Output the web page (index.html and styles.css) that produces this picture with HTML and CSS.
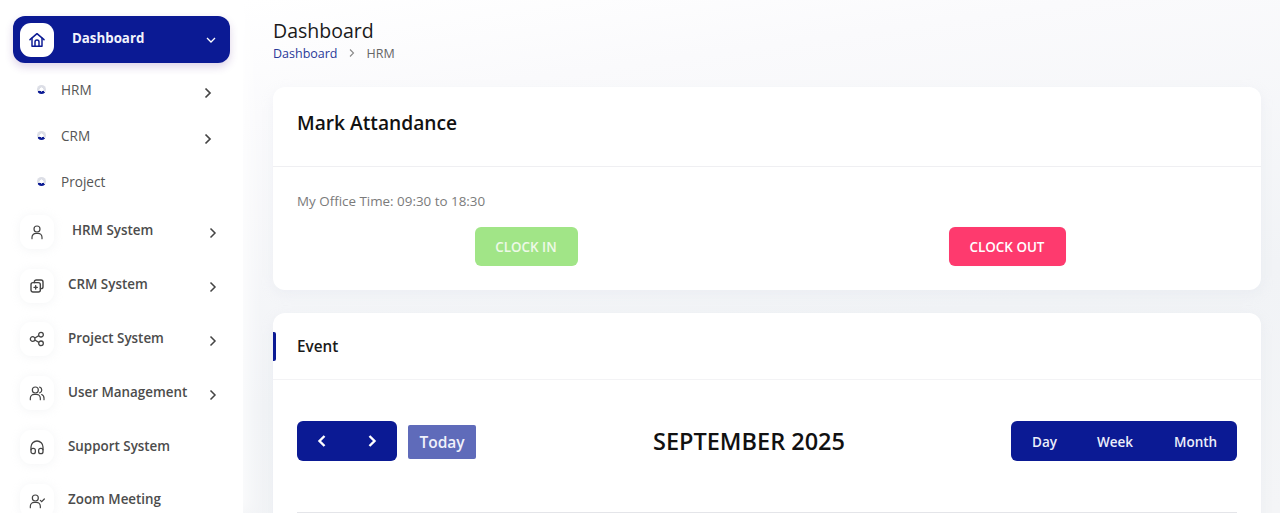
FILE: index.html
```html
<!DOCTYPE html>
<html lang="en">
<head>
<meta charset="utf-8">
<title>Dashboard</title>
<link rel="stylesheet" href="styles.css">
</head>
<body>
<div class="app">
  <aside class="sidebar">
    <a class="nav-active">
      <span class="icon-box"><svg width="16" height="16" viewBox="0 0 24 24" fill="none" stroke="#0b1a94" stroke-width="2.200" stroke-linejoin="round" stroke-linecap="round"><path d="M1.500 11.500 12 2.500l10.500 9"/><path d="M4.500 9.500V21.500h15V9.500"/><path d="M9 21.500V15a3 3 0 0 1 6 0v6.500"/></svg></span>
      <span class="active-label">Dashboard</span>
      <svg class="active-caret" width="12" height="12" viewBox="0 0 12 12" fill="none" stroke="#fff" stroke-width="1.300"><path d="M2 4l4 4 4-4"/></svg>
    </a>
    <ul class="sub">
      <li class="sub-item"><span class="dot"></span><span class="sub-label">HRM</span><svg class="sub-caret" width="10" height="12" viewBox="0 0 10 12" fill="none" stroke="#444" stroke-width="1.700"><path d="M2.500 1.500 7 6l-4.500 4.500"/></svg></li>
      <li class="sub-item"><span class="dot"></span><span class="sub-label">CRM</span><svg class="sub-caret" width="10" height="12" viewBox="0 0 10 12" fill="none" stroke="#444" stroke-width="1.700"><path d="M2.500 1.500 7 6l-4.500 4.500"/></svg></li>
      <li class="sub-item"><span class="dot"></span><span class="sub-label">Project</span></li>
    </ul>
    <ul class="menu">
      <li class="menu-item">
        <span class="icon-box soft"><svg width="16" height="16" viewBox="0 0 24 24" fill="none" stroke="#444" stroke-width="1.800" stroke-linecap="round"><circle cx="12" cy="7.500" r="4.500"/><path d="M4.500 22v-2a6 6 0 0 1 6-6h3a6 6 0 0 1 6 6v2"/></svg></span>
        <span class="menu-label first">HRM System</span>
        <svg class="menu-caret" width="10" height="12" viewBox="0 0 10 12" fill="none" stroke="#444" stroke-width="1.500"><path d="M2.500 1.500 7 6l-4.500 4.500"/></svg>
      </li>
      <li class="menu-item">
        <span class="icon-box soft"><svg width="16" height="16" viewBox="0 0 24 24" fill="none" stroke="#444" stroke-width="2.100" stroke-linejoin="round" stroke-linecap="round"><path d="M8 7V6a3 3 0 0 1 3-3h7a3 3 0 0 1 3 3v7a3 3 0 0 1-3 3h-1"/><rect x="3" y="7" width="14" height="14" rx="3"/><path d="M10 11.500v5M7.500 14h5"/></svg></span>
        <span class="menu-label">CRM System</span>
        <svg class="menu-caret" width="10" height="12" viewBox="0 0 10 12" fill="none" stroke="#444" stroke-width="1.500"><path d="M2.500 1.500 7 6l-4.500 4.500"/></svg>
      </li>
      <li class="menu-item">
        <span class="icon-box soft"><svg width="16" height="16" viewBox="0 0 24 24" fill="none" stroke="#444" stroke-width="1.900"><circle cx="5.500" cy="12" r="3.500"/><circle cx="18" cy="5.500" r="3.500"/><circle cx="18" cy="18.500" r="3.500"/><path d="M8.700 10.400 14.900 7M8.700 13.600l6.200 3.400"/></svg></span>
        <span class="menu-label">Project System</span>
        <svg class="menu-caret" width="10" height="12" viewBox="0 0 10 12" fill="none" stroke="#444" stroke-width="1.500"><path d="M2.500 1.500 7 6l-4.500 4.500"/></svg>
      </li>
      <li class="menu-item">
        <span class="icon-box soft"><svg width="16" height="16" viewBox="0 0 24 24" fill="none" stroke="#444" stroke-width="1.800" stroke-linecap="round"><circle cx="9.500" cy="7.500" r="4.500"/><path d="M2 22v-2a6 6 0 0 1 6-6h3a6 6 0 0 1 6 6v2"/><path d="M16 3.200a4.500 4.500 0 0 1 0 8.600M19 14.300a6 6 0 0 1 3.500 5.700v2"/></svg></span>
        <span class="menu-label">User Management</span>
        <svg class="menu-caret" width="10" height="12" viewBox="0 0 10 12" fill="none" stroke="#444" stroke-width="1.500"><path d="M2.500 1.500 7 6l-4.500 4.500"/></svg>
      </li>
      <li class="menu-item">
        <span class="icon-box soft"><svg width="16" height="16" viewBox="0 0 24 24" fill="none" stroke="#444" stroke-width="1.900" stroke-linejoin="round"><path d="M3 17v-5a9 9 0 0 1 18 0v5"/><rect x="3" y="14" width="6.500" height="8" rx="3"/><rect x="14.500" y="14" width="6.500" height="8" rx="3"/></svg></span>
        <span class="menu-label">Support System</span>
      </li>
      <li class="menu-item">
        <span class="icon-box soft"><svg width="16" height="16" viewBox="0 0 24 24" fill="none" stroke="#444" stroke-width="1.800" stroke-linecap="round"><circle cx="9.500" cy="7.500" r="4.500"/><path d="M2 22v-2a6 6 0 0 1 6-6h3a6 6 0 0 1 6 6v2"/><path d="m17 11 2 2 4-4"/></svg></span>
        <span class="menu-label">Zoom Meeting</span>
      </li>
    </ul>
  </aside>
  <main class="main">
    <header class="page-head">
      <h1 class="page-title">Dashboard</h1>
      <nav class="crumbs"><span class="crumb-link">Dashboard</span><svg class="crumb-sep" width="8" height="10" viewBox="0 0 8 10" fill="none" stroke="#888" stroke-width="1.100"><path d="M2 1.500 5.500 5 2 8.500"/></svg><span class="crumb-now">HRM</span></nav>
    </header>
    <section class="card attendance">
      <div class="attendance-head"><h2 class="attendance-title">Mark Attandance</h2></div>
      <div class="attendance-body">
        <p class="office-time">My Office Time: 09:30 to 18:30</p>
        <div class="clock-row">
          <div class="clock-cell"><button class="clock clock-in">CLOCK IN</button></div>
          <div class="clock-cell"><button class="clock clock-out">CLOCK OUT</button></div>
        </div>
      </div>
    </section>
    <section class="card event">
      <div class="event-head"><span class="event-mark"></span><h2 class="event-title">Event</h2></div>
      <div class="event-body">
        <div class="toolbar">
          <div class="tool-left">
            <div class="btn-group arrows">
              <button class="arrow"><svg width="12" height="14" viewBox="0 0 12 14" fill="none" stroke="#fff" stroke-width="2.400"><path d="M8.500 2 3.500 7l5 5"/></svg></button>
              <button class="arrow"><svg width="12" height="14" viewBox="0 0 12 14" fill="none" stroke="#fff" stroke-width="2.400"><path d="M3.500 2l5 5-5 5"/></svg></button>
            </div>
            <button class="today">Today</button>
          </div>
          <h2 class="month-title">SEPTEMBER 2025</h2>
          <div class="btn-group views">
            <button class="view">Day</button>
            <button class="view">Week</button>
            <button class="view">Month</button>
          </div>
        </div>
        <div class="calendar-top"></div>
      </div>
    </section>
  </main>
</div>
</body>
</html>
```
FILE: styles.css
```css
* { box-sizing: border-box; }
html, body { margin: 0; height: 100%; overflow: hidden; }
body {
  font-family: "Open Sans", "Liberation Sans", sans-serif;
  background: #fff;
  color: #111;
}
ul { list-style: none; margin: 0; padding: 0; }
h1, h2, p { margin: 0; font-weight: 400; }
button { font-family: inherit; border: 0; cursor: pointer; }

.app { display: flex; height: 513px; overflow: hidden; }

/* Sidebar */
.sidebar {
  flex: 0 0 243px;
  padding: 16px 13px 0;
  background: #fff;
  z-index: 1;
  box-shadow: 6px 0 16px rgba(255, 255, 255, .75);
}
.nav-active {
  display: flex;
  align-items: center;
  width: 217px;
  height: 47px;
  padding: 0 13px 0 7px;
  border-radius: 12px;
  background: #0b1a94;
  box-shadow: 0 4px 9px rgba(90, 40, 140, .2);
}
.icon-box {
  flex: 0 0 34px;
  width: 34px;
  height: 34px;
  display: flex;
  align-items: center;
  justify-content: center;
  background: #fff;
  border-radius: 11px;
}
.icon-box.soft { box-shadow: 0 1px 10px rgba(205, 208, 216, .22); }
.active-label {
  margin: -3px 0 0 18px;
  font-size: 13.300px;
  font-weight: 700;
  color: #f2f3fb;
  line-height: 18px;
}
.active-caret { margin-left: auto; }

.sub { padding: 4px 0 0 21px; }
.sub-item {
  display: flex;
  align-items: center;
  width: 160px;
  height: 46px;
  position: relative;
}
.dot {
  width: 9px;
  height: 9px;
  border-radius: 50%;
  margin: -2px 0 0 3px;
  background:
    radial-gradient(circle, #fff 0 30%, transparent 34%),
    conic-gradient(from 130deg, #0b1a94 0 30%, #dcdee6 30% 100%);
}
.sub-label {
  margin: -1px 0 0 15px;
  font-size: 13.600px;
  line-height: 18px;
  color: #555;
}
.sub-caret { margin: 5px 0 0 auto; position: relative; left: 19px; }

.menu { margin-left: 7px; }
.menu-item {
  display: flex;
  align-items: center;
  height: 53.800px;
  width: 198px;
}
.menu-label {
  margin: -3px 0 0 14px;
  font-size: 13.400px;
  font-weight: 600;
  line-height: 18px;
  color: #4c4c4c;
  white-space: nowrap;
}
.menu-label.first { margin-left: 18px; }
.menu-caret { margin: 3px 0 0 auto; flex: none; }

/* Main */
.main {
  flex: 1;
  min-width: 0;
  padding: 19px 19px 0 30px;
  background: linear-gradient(172deg, #ffffff 0, #fafafc 18%, #f1f3f6 62%, #f4f5f7 100%);
}
.page-head { height: 68px; }
.page-title { font-size: 19.500px; line-height: 24px; color: #1a1a1a; }
.crumbs { display: flex; align-items: center; margin-top: 1px; height: 18px; font-size: 12.500px; }
.crumb-link { color: #2a3a99; }
.crumb-sep { margin: 0 11px 0 10px; }
.crumb-now { color: #666; }

.card {
  background: #fff;
  border-radius: 12px;
  box-shadow: 0 4px 12px rgba(215, 220, 230, .25);
}
.attendance { height: 203px; }
.attendance-head {
  height: 80px;
  padding: 0 24px;
  display: flex;
  align-items: center;
  border-bottom: 1px solid #efeff2;
}
.attendance-title { font-size: 19.200px; font-weight: 600; color: #111; margin-top: -9px; }
.attendance-body { padding: 25px 24px 0; }
.office-time { font-size: 13.400px; line-height: 18px; color: #7b7b7b; }
.clock-row { display: grid; grid-template-columns: 1fr 1fr; margin-top: 17px; }
.clock-cell { display: flex; justify-content: center; }
.clock-cell:first-child { padding-right: 12px; }
.clock-cell:last-child { padding-left: 10px; }
.clock {
  height: 39px;
  padding: 0;
  border-radius: 6px;
  color: #fff;
  font-size: 13.400px;
  font-weight: 600;
}
.clock-in { width: 103px; background: #a1e587; color: #eef9e8; }
.clock-out { width: 117px; background: #fe3a6e; box-shadow: 0 0 1px rgba(0,0,0,.1); }

.event { margin-top: 23px; height: 260px; }
.event-head {
  position: relative;
  height: 67px;
  padding: 0 24px;
  display: flex;
  align-items: center;
  border-bottom: 1px solid #f3f3f5;
}
.event-mark {
  position: absolute;
  left: 0;
  top: 19px;
  width: 3px;
  height: 29px;
  background: #0b1a94;
  border-radius: 0 2px 2px 0;
}
.event-title { font-size: 15.300px; font-weight: 600; color: #1a1a1a; margin-top: -1px; }
.event-body { padding: 41px 24px 0; }
.toolbar {
  display: flex;
  justify-content: space-between;
  align-items: center;
  height: 40px;
}
.tool-left { display: flex; align-items: center; gap: 11px; margin-right: 11px; }
.btn-group { display: flex; background: #0b1a94; border-radius: 6px; height: 40px; }
.arrows { width: 100px; }
.arrow { flex: 1; background: transparent; display: flex; align-items: center; justify-content: center; padding: 0; }
.today {
  width: 68px;
  height: 34px;
  margin-top: 2px;
  padding: 0;
  background: #5f6bba;
  color: #f0f1fa;
  font-size: 15.500px;
  font-weight: 600;
  border-radius: 2px;
}
.month-title { font-size: 23.500px; font-weight: 600; color: #111; }
.views { width: 226px; padding: 0 0 0 21px; }
.view {
  background: transparent;
  color: #eceefa;
  font-size: 13.500px;
  font-weight: 600;
  padding: 2px 0 0;
  text-align: left;
}
.view:nth-child(1) { width: 65px; }
.view:nth-child(2) { width: 77px; }
.view:nth-child(3) { width: 50px; }
.calendar-top { margin-top: 51px; border-top: 1px solid #e4e5e9; }
```
